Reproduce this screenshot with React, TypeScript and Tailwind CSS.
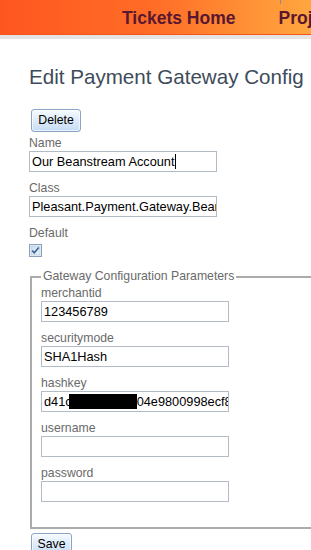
import React from "react";

const inputCls =
  "w-[188px] h-[21px] border border-[#b3bcc6] bg-white flex items-center pl-[2px] overflow-hidden whitespace-nowrap text-[12.75px] text-black";
const labelCls = "block text-[12.25px] leading-[15px] text-[#6a6a6a]";
const btnCls =
  "h-[23px] rounded-[3px] border border-[#8aa5c4] bg-linear-to-b from-[#f5faff] to-[#c6dcf4] text-[12.25px] text-black flex items-center justify-center shadow-[inset_0_0_0_1px_rgba(255,255,255,0.6)]";

function Field({ label, children, first }: { label: string; children: React.ReactNode; first?: boolean }) {
  return (
    <div className={first ? "" : "mt-[9px]"}>
      <div className={labelCls}>{label}</div>
      {children}
    </div>
  );
}

export default function App() {
  return (
    <div className="w-[311px] h-[550px] overflow-hidden bg-white font-['Liberation_Sans',Arial,sans-serif]">
      {/* Header */}
      <div className="relative h-[35px] border-b border-[#f4561c] bg-linear-to-r from-[#ff5620] via-[#ff6d27] to-[#ffa63f] flex pl-[122px] pt-[8px] gap-[43px] whitespace-nowrap overflow-hidden">
        <span className="text-[17.5px] leading-[20px] font-bold text-[#5a1830]">Tickets Home</span>
        <span className="text-[17.5px] leading-[20px] font-bold text-[#5a1830]">Projects</span>
        <div className="absolute left-[280px] top-0 w-px h-[4px] bg-[#8a8aa0]" />
      </div>
      <div className="h-[4px] bg-[#e4e4e4]" />

      <div className="px-[29px] pt-[26px]">
        <h1 className="text-[20.6px] leading-[24px] font-normal text-[#3d4b5a] whitespace-nowrap">
          Edit Payment Gateway Config
        </h1>

        <div className="mt-[20px] ml-[2px]">
          <button className={btnCls + " w-[50px]"}>Delete</button>
        </div>

        <div className="mt-[4px]">
          <div className={labelCls}>Name</div>
          <div className={inputCls}>
            <span>Our Beanstream Account</span>
            <span className="inline-block w-px h-[15px] bg-black ml-[1px]" />
          </div>
        </div>

        <Field label="Class">
          <div className={inputCls}>Pleasant.Payment.Gateway.Beanstream</div>
        </Field>

        <div className="mt-[9px]">
          <div className={labelCls}>Default</div>
          <div className="mt-[3px] w-[13px] h-[13px]">
            <svg width="13" height="13" viewBox="0 0 13 13">
              <defs>
                <linearGradient id="cbg" x1="0" y1="0" x2="1" y2="1">
                  <stop offset="0" stopColor="#c9dcf0" />
                  <stop offset="1" stopColor="#eaf3fb" />
                </linearGradient>
              </defs>
              <rect x="0.5" y="0.5" width="12" height="12" fill="#f4f8fc" stroke="#8a9fb8" />
              <rect x="2" y="2" width="9" height="9" fill="url(#cbg)" stroke="#a9c2dc" strokeWidth="0.6" />
              <path d="M3.2 6.6 L5.3 8.8 L9.8 3.6" fill="none" stroke="#3e6190" strokeWidth="1.6" />
            </svg>
          </div>
        </div>

        <fieldset className="mt-[12px] ml-[1px] w-[330px] border-2 border-solid border-[#ababab] pl-[9px] pt-[2px] pb-[25px]">
          <legend className="px-[2px] text-[12.25px] leading-[15px] text-[#6a6a6a]">
            Gateway Configuration Parameters
          </legend>
          <Field label="merchantid" first>
            <div className={inputCls}>123456789</div>
          </Field>
          <Field label="securitymode">
            <div className={inputCls}>SHA1Hash</div>
          </Field>
          <Field label="hashkey">
            <div className={inputCls}>
              <span>d41c</span>
              <span className="inline-block shrink-0 w-[68px] h-[15px] bg-black -ml-[3px]" />
              <span>04e9800998ecf8a1</span>
            </div>
          </Field>
          <Field label="username">
            <div className={inputCls}></div>
          </Field>
          <Field label="password">
            <div className={inputCls}></div>
          </Field>
        </fieldset>

        <div className="mt-[4px] ml-[2px]">
          <button className={btnCls + " w-[41px]"}>Save</button>
        </div>
      </div>
    </div>
  );
}
